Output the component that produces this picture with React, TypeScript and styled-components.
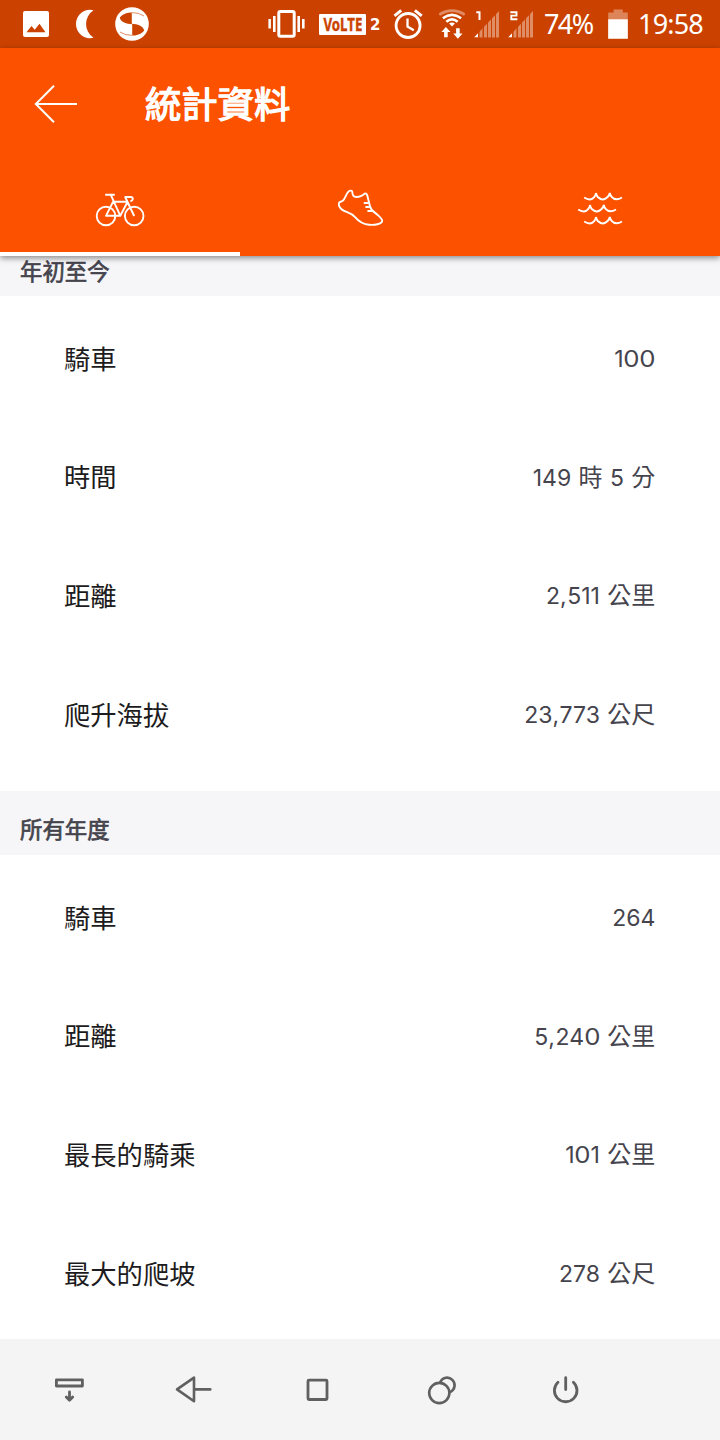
import React from "react";
import styled, { createGlobalStyle } from "styled-components";

const GlobalStyle = createGlobalStyle`
  * { box-sizing: border-box; }
  body { margin: 0; background: #fff; }
`;

const Screen = styled.div`
  display: flex;
  flex-direction: column;
  width: 720px;
  height: 1440px;
  overflow: hidden;
  background: #fff;
  font-family: "Noto Sans CJK TC", sans-serif;
`;

const StatusBar = styled.div`
  flex: none;
  display: flex;
  align-items: center;
  justify-content: space-between;
  height: 48px;
  padding: 0 16px 0 22px;
  background: #cb4200;
  color: #fff;
`;

const StatusGroup = styled.div`
  display: flex;
  align-items: center;
  height: 48px;
`;

const Glyph = styled.svg<{ $gap?: number }>`
  display: block;
  flex: none;
  margin-left: ${(p) => p.$gap ?? 0}px;
`;

const StatusText = styled.span<{ $width: number; $gap: number; $tracking: number }>`
  width: ${(p) => p.$width}px;
  margin-left: ${(p) => p.$gap}px;
  font: 400 27px/48px "Noto Sans", sans-serif;
  letter-spacing: ${(p) => p.$tracking}px;
  white-space: nowrap;
`;

const VolteBadge = styled.span`
  display: flex;
  align-items: center;
  justify-content: center;
  width: 47px;
  height: 21px;
  margin: 1px 0 0 14px;
  border-radius: 1px;
  background: #fff;
  color: #cb4200;
  font: 700 17px/20px "Noto Sans", sans-serif;
`;

const VolteText = styled.span`
  transform: scaleX(0.78);
  -webkit-text-stroke: 0.4px currentColor;
`;

const SimNumber = styled.span`
  width: 10px;
  margin: 2px 0 0 4px;
  font: 700 15px/21px "DejaVu Sans", sans-serif;
`;

const Header = styled.header`
  flex: none;
  position: relative;
  z-index: 1;
  background: #fc5200;
  color: #fff;
  box-shadow: 0 2px 6px rgba(0, 0, 0, 0.45);
`;

const TitleBar = styled.div`
  display: flex;
  align-items: center;
  height: 112px;
  padding-left: 34px;
`;

const Title = styled.h1`
  margin: 0 0 4px 66px;
  font-size: 36.3px;
  line-height: 52px;
  font-weight: 400;
  -webkit-text-stroke: 1.3px currentColor;
`;

const Tabs = styled.nav`
  display: grid;
  grid-template-columns: repeat(3, 1fr);
  height: 96px;
`;

const Tab = styled.div<{ $active?: boolean }>`
  display: flex;
  justify-content: center;
  padding-top: 24px;
  border-bottom: 4px solid ${(p) => (p.$active ? "#fff" : "transparent")};
`;

const Content = styled.main`
  flex: 1;
  min-height: 0;
  overflow: hidden;
`;

const SectionTitle = styled.h2<{ $clipped?: boolean }>`
  height: ${(p) => (p.$clipped ? 40 : 64)}px;
  margin: 0;
  padding: ${(p) => (p.$clipped ? 0 : 23)}px 20px 0;
  background: #f6f6f9;
  color: #45444d;
  font-size: 22.4px;
  line-height: 28px;
  font-weight: 400;
  -webkit-text-stroke: 0.7px currentColor;
`;

const Rows = styled.div`
  height: 495px;
  padding-top: 3px;
`;

const Row = styled.div`
  display: flex;
  align-items: center;
  justify-content: space-between;
  height: 118.6px;
  padding: 0 64.7px 0 64px;
`;

const Label = styled.span`
  margin-bottom: 2px;
  color: #1c1b20;
  font-size: 26.3px;
`;

const Value = styled.span`
  color: #45444d;
  font-size: 24px;
  line-height: 36px;
  word-spacing: 2px;
`;

const Digits = styled.span`
  font-family: Inter, sans-serif;
  font-size: 23px;
`;

const Zero = styled.span`
  display: inline-block;
  margin: 0 0.7px;
  transform: scaleX(1.12);
`;

const Comma = styled.span`
  letter-spacing: 0.6px;
`;

const NavBar = styled.footer`
  flex: none;
  display: grid;
  grid-template-columns: repeat(5, 124px);
  align-items: center;
  justify-items: center;
  height: 101px;
  padding-left: 7.5px;
  background: #f4f4f4;
`;

const SignalBars = ({ sim }: { sim: string }) => (
  <>
    <clipPath id={`slope${sim}`}>
      <path d="M0 37.5 25 11V37.5Z" />
    </clipPath>
    <g clipPath={`url(#slope${sim})`}>
      <path d="M0 33H4V37.5H0Z" fill="#fff" />
      <path
        d="M5.5 10h3v28h-3zM10 10h3v28h-3zM14 10h3v28h-3zM18 10h3v28h-3zM22 10h3v28h-3z"
        fill="#fff"
        opacity=".4"
      />
    </g>
  </>
);

type Entry = { label: string; value: string };
type Group = { title: string; rows: Entry[] };

const groups: Group[] = [
  {
    title: "年初至今",
    rows: [
      { label: "騎車", value: "100" },
      { label: "時間", value: "149 時 5 分" },
      { label: "距離", value: "2,511 公里" },
      { label: "爬升海拔", value: "23,773 公尺" },
    ],
  },
  {
    title: "所有年度",
    rows: [
      { label: "騎車", value: "264" },
      { label: "距離", value: "5,240 公里" },
      { label: "最長的騎乘", value: "101 公里" },
      { label: "最大的爬坡", value: "278 公尺" },
    ],
  },
];

const formatDigits = (digits: string) =>
  digits.split(/([0,])/).map((part, i) => {
    if (part === "0") return <Zero key={i}>0</Zero>;
    if (part === ",") return <Comma key={i}>,</Comma>;
    return part;
  });

const formatValue = (value: string) =>
  value
    .split(/([\d,]+)/)
    .map((part, i) => (/\d/.test(part) ? <Digits key={i}>{formatDigits(part)}</Digits> : part));

const navStroke = {
  fill: "none",
  stroke: "#606060",
  strokeWidth: 2.8,
  strokeLinecap: "round" as const,
  strokeLinejoin: "round" as const,
};

export default function App() {
  return (
    <Screen>
      <GlobalStyle />
      <StatusBar>
        <StatusGroup>
          <Glyph width="28" height="48" viewBox="22 0 28 48">
            <rect x="23" y="11" width="26" height="26" rx="2" fill="#fff" />
            <path d="M26.5 32.3 31.5 26 34.7 29.7 39.5 23.8 45.5 32.3Z" fill="#cb4200" />
          </Glyph>
          <Glyph $gap={24} width="22" height="48" viewBox="74 0 22 48">
            <path d="M93.5 10.2A14.2 14.2 0 1 0 93.5 37.8A16.5 16.5 0 0 1 93.5 10.2Z" fill="#fff" />
          </Glyph>
          <Glyph $gap={18} width="36" height="48" viewBox="114 0 36 48">
            <circle cx="132" cy="24" r="16.8" fill="#fff" />
            <path
              d="M119.8 17.5C123 13.4 128 12.4 131.8 12.4V24.3C127 24 120.5 22.2 119.8 17.5Z M144.2 30.5C141 34.6 136 35.6 132.2 35.6V23.7C137 24 143.5 25.8 144.2 30.5Z"
              fill="#cb4200"
            />
            <path
              d="M132 12.6Q139 12.6 144 16M132 35.4Q125 35.4 120 32"
              fill="none"
              stroke="#cb4200"
              strokeWidth="1"
              opacity=".6"
            />
          </Glyph>
        </StatusGroup>
        <StatusGroup>
          <Glyph width="37" height="48" viewBox="268 0 37 48">
            <rect x="278.8" y="11.5" width="15.4" height="24.7" rx="1.5" fill="none" stroke="#fff" strokeWidth="3" />
            <path d="M268.4 19h2.5v9.6h-2.5zM273 16h2.6v16H273zM297.4 16h2.6v16h-2.6zM302 19h2.6v9.6H302z" fill="#fff" />
          </Glyph>
          <VolteBadge>
            <VolteText>VoLTE</VolteText>
          </VolteBadge>
          <SimNumber>2</SimNumber>
          <Glyph $gap={13} width="30" height="48" viewBox="393.5 0 30 48">
            <circle cx="408.6" cy="25.5" r="12" fill="none" stroke="#fff" strokeWidth="2.8" />
            <path d="M395 15.8 401.7 10.4M415.4 10.4 422.2 15.8" stroke="#fff" strokeWidth="3" />
            <path d="M408 18.5V26.6L414.3 30.2" fill="none" stroke="#fff" strokeWidth="2.3" />
          </Glyph>
          <Glyph $gap={15} width="28" height="48" viewBox="438.5 0 28 48">
            <g fill="none" stroke="#fff" strokeWidth="2.6">
              <path d="M439.8 14.6Q452.5 6.6 465.2 14.6" opacity=".4" />
              <path d="M443.4 18.2Q452.5 11.4 461.6 18.2" />
              <path d="M446.8 21.8Q452.5 17 458.2 21.8" />
            </g>
            <path d="M449.6 23.6Q452.5 21.4 455.4 23.6L452.5 26.5Z" fill="#fff" />
            <path d="M446.4 27 451 32H448.2V37.3H444.6V32H441.8ZM458.4 38.8 463 33.5H460.2V28.3H456.6V33.5H453.8Z" fill="#fff" />
          </Glyph>
          <Glyph $gap={8} width="25" height="48" viewBox="0 0 25 48">
            <SignalBars sim="1" />
            <path d="M2.3 12.3H5.5V20" fill="none" stroke="#fff" strokeWidth="2" />
          </Glyph>
          <Glyph $gap={9} width="25" height="48" viewBox="0 0 25 48">
            <SignalBars sim="2" />
            <path d="M2.3 12.2H8.5V15.6H3.3V19.2H9.4" fill="none" stroke="#fff" strokeWidth="1.9" />
          </Glyph>
          <StatusText $width={51} $gap={11} $tracking={-1.6}>74%</StatusText>
          <Glyph $gap={13} width="20" height="48" viewBox="608 0 20 48">
            <path d="M613.6 9.5H622.8V12.5H627.8V38.7H608.2V12.5H613.6Z" fill="#fff" opacity=".35" />
            <path d="M608.2 19.3H627.8V38.7H608.2Z" fill="#fff" />
          </Glyph>
          <StatusText $width={66} $gap={10} $tracking={-0.8}>19:58</StatusText>
        </StatusGroup>
      </StatusBar>

      <Header>
        <TitleBar>
          <Glyph width="45" height="40" viewBox="34 84 45 40">
            <path d="M54 85.8 35.8 104 54 122.2M35.8 104H77" fill="none" stroke="#fff" strokeWidth="2" />
          </Glyph>
          <Title>統計資料</Title>
        </TitleBar>
        <Tabs>
          <Tab $active>
            <Glyph width="52" height="48" viewBox="94 184 52 48">
              <g fill="none" stroke="#fff" strokeWidth="1.9" strokeLinejoin="round">
                <circle cx="106" cy="216" r="9.3" />
                <circle cx="134.2" cy="216" r="9.3" />
                <path d="M105.2 194.8H114.8M110.8 194.8 120.3 215.8H106L113 201.8H127.6L120.3 215.8M134.2 216 125.2 197H130.8Q133 197.2 132.8 199.2Q132.6 200.8 130.4 201.2" />
              </g>
            </Glyph>
          </Tab>
          <Tab>
            <Glyph width="52" height="48" viewBox="334 184 52 48">
              <g fill="none" stroke="#fff" strokeWidth="1.9" strokeLinejoin="round">
                <path d="M338.9 203.2C339 201.4 341.8 202.2 343.4 200.2C345.4 197.6 346.4 193.6 348.4 191.6C350.2 190 352.4 190.4 352.4 192.4C352.2 195 353.6 197 356.2 197C360.4 197 362.4 196 364 194.2C365.4 192.8 366.8 193.6 367.3 195.6L370 206.2C370.8 210.4 374.2 212 376.8 214.2C379.4 216.6 382.4 218.6 382.2 220.8C381.8 224.2 374.4 225.2 369.2 224.8C362.6 224.4 358.6 221.2 354.8 216.8C351.2 212.8 346.2 212.4 342 209.6C339.6 208 338.6 205.4 338.9 203.2Z" />
                <path d="M363.8 203H368.8M365.4 207H370.2M367.4 211H372.4" />
              </g>
            </Glyph>
          </Tab>
          <Tab>
            <Glyph width="52" height="48" viewBox="574 184 52 48">
              <g fill="none" stroke="#fff" strokeWidth="1.9">
                {[
                  [0, 0],
                  [-6, 12],
                  [0, 24],
                ].map(([x, y]) => (
                  <path
                    key={y}
                    transform={`translate(${x} ${y})`}
                    d="M584.2 197.5Q590.5 201.7 594.4 196.8Q595.8 195 596 193Q596.4 195.4 597.8 197Q602.8 201.8 607.6 197Q609.4 195.2 609.8 193Q610.2 195.2 611.6 196.8Q615.6 201.4 622 197.5"
                  />
                ))}
              </g>
            </Glyph>
          </Tab>
        </Tabs>
      </Header>

      <Content>
        {groups.map((group, i) => (
          <section key={group.title}>
            <SectionTitle $clipped={i === 0}>{group.title}</SectionTitle>
            <Rows>
              {group.rows.map((row) => (
                <Row key={row.label}>
                  <Label>{row.label}</Label>
                  <Value>{formatValue(row.value)}</Value>
                </Row>
              ))}
            </Rows>
          </section>
        ))}
      </Content>

      <NavBar>
        <Glyph width="41" height="41" viewBox="49 1369 41 41">
          <g {...navStroke}>
            <path d="M56.4 1379.8H82.4V1386H56.4ZM69.5 1392V1400M66.3 1397 69.5 1400.2 72.7 1397" />
          </g>
        </Glyph>
        <Glyph width="41" height="41" viewBox="173 1369 41 41">
          <g {...navStroke} strokeWidth={2.6}>
            <path d="M194 1377.6V1401.2L177 1389.4ZM194 1389.4H210.3" />
          </g>
        </Glyph>
        <Glyph width="41" height="41" viewBox="297 1369 41 41">
          <rect x="308" y="1380.2" width="19" height="19.3" rx="1" {...navStroke} />
        </Glyph>
        <Glyph width="41" height="41" viewBox="421 1369 41 41">
          <g {...navStroke} strokeWidth={2.6}>
            <circle cx="439.3" cy="1393" r="10.1" />
            <path d="M440.4 1381.8A7.5 7.5 0 1 1 450.6 1391.8" />
          </g>
        </Glyph>
        <Glyph width="41" height="41" viewBox="545 1369 41 41">
          <g {...navStroke}>
            <path d="M558 1382.2A11.3 11.3 0 1 0 573.4 1382.2M565.7 1377.7V1389.6" />
          </g>
        </Glyph>
      </NavBar>
    </Screen>
  );
}
